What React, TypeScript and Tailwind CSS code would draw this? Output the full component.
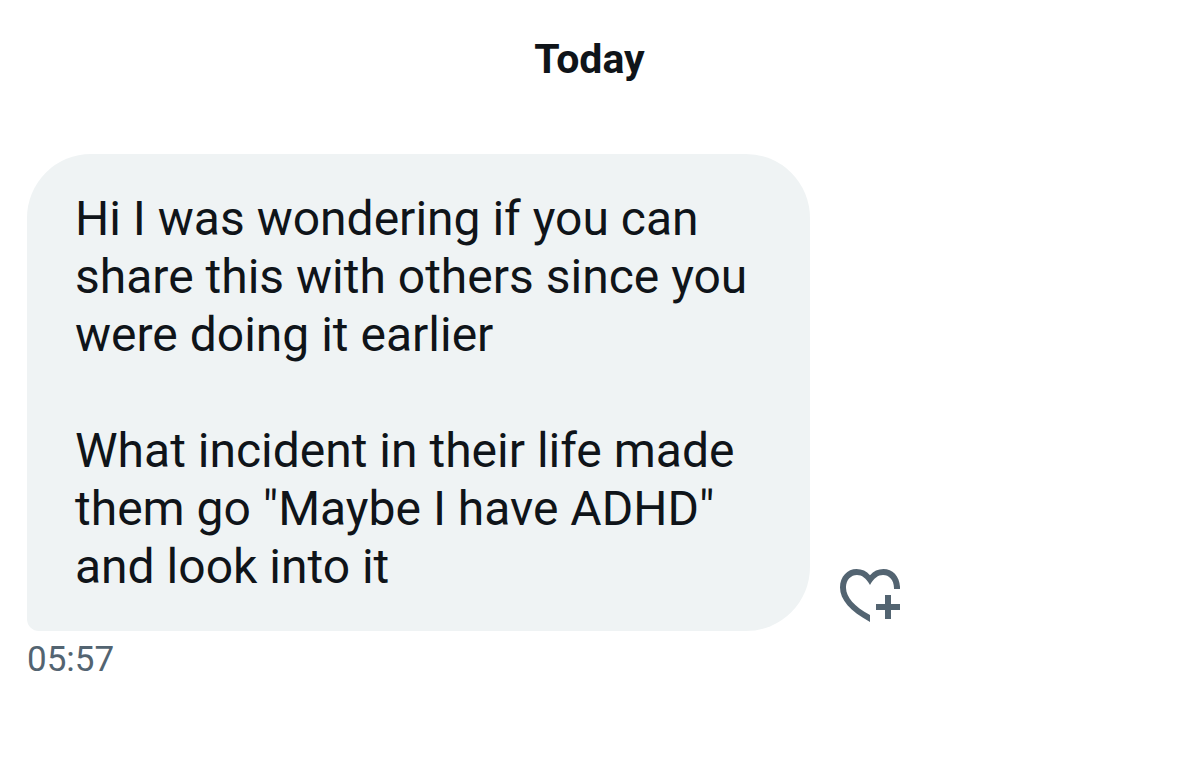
import React from 'react';

interface Message {
  id: number;
  paragraphs: string[];
  time: string;
}

interface MessageRowProps {
  message: Message;
}

const messages: Message[] = [
  {
    id: 1,
    paragraphs: [
      'Hi I was wondering if you can share this with others since you were doing it earlier',
      'What incident in their life made them go "Maybe I have ADHD" and look into it',
    ],
    time: '05:57',
  },
];

const HeartPlusIcon: React.FC = () => (
  <svg viewBox="0 0 60 53" className="h-[53px] w-[60px]" fill="currentColor" aria-hidden="true">
    {/* heart, cut off at the lower right */}
    <path d="M60 20H54C54.3 11 49 6 43 6C38 6 34 9 30 16C26 9 22 6 17 6C11 6 5.700 11 6 19C6.300 28 14 37.500 30 46V53C10 42 0 30.500 0 18.500C0 7.500 7.500 0 16.500 0C22 0 26.500 2.200 30 6.300C33.500 2.200 38 0 43.500 0C53 0 60.500 8 60 20Z" />
    {/* plus */}
    <path d="M45 26H51V35H60V41H51V50H45V41H36V35H45Z" />
  </svg>
);

const MessageRow: React.FC<MessageRowProps> = ({ message }) => (
  <li>
    <div className="flex items-end gap-[30px]">
      <div className="max-w-[783px] grow rounded-[64px] rounded-bl-xl bg-[#eff3f4] px-12 pt-9 pb-[35px]">
        {message.paragraphs.map((text, idx) => (
          <p key={idx} className="mb-[58px] text-[48px] leading-[58px] last:mb-0">
            {text}
          </p>
        ))}
      </div>
      <button type="button" aria-label="Add reaction" className="mb-[9px] shrink-0 text-[#536471]">
        <HeartPlusIcon />
      </button>
    </div>
    <time className="mt-2 block text-[35px] leading-[42px] text-[#536471]">{message.time}</time>
  </li>
);

const App: React.FC = () => {
  return (
    <main className="min-h-screen bg-white px-[27px] pt-8 text-[#0f1419] font-[Roboto,Arial,sans-serif]">
      <h1 className="text-center text-[41px] leading-[54px] font-bold">Today</h1>
      <ul className="mt-[68px]">
        {messages.map((message) => (
          <MessageRow key={message.id} message={message} />
        ))}
      </ul>
    </main>
  );
};

export default App;
